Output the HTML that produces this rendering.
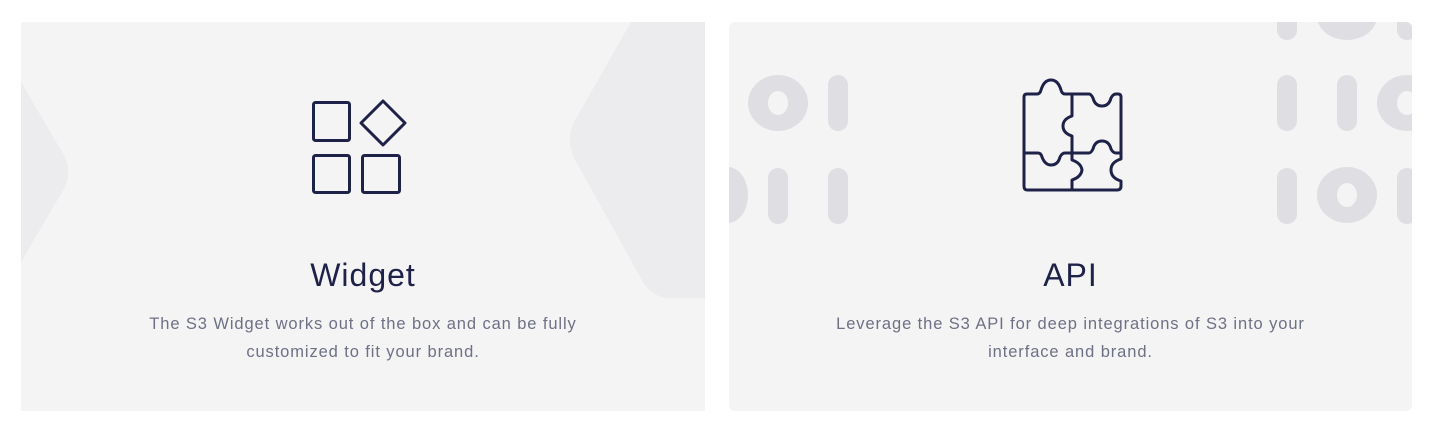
<!DOCTYPE html>
<html><head><style>
body{margin:0;width:1434px;height:429px;background:#fff;position:relative;font-family:"Liberation Sans",sans-serif;overflow:hidden}
.card{position:absolute;top:22px;height:389px;background:#f4f4f4;overflow:hidden}
.t{position:absolute;left:0;right:0;text-align:center;color:#1f2248;font-size:32px;letter-spacing:1px;top:235px}
.d{position:absolute;left:0;right:0;text-align:center;color:#6e7085;font-size:16.5px;letter-spacing:.9px;line-height:28px;top:288px}
</style></head><body>
<div class="card" style="left:21px;width:684px">
<svg width="684" height="389" style="position:absolute;left:0;top:0">
<path d="M0 60 L44 135 Q50 150 44 165 L0 240 Z" fill="#ececee"/>
<path d="M610 0 L553 100 Q545 118 553 136 L622 260 Q632 276 650 276 L684 276 L684 0 Z" fill="#ececee"/>
<g fill="none" stroke="#1f2248" stroke-width="3" stroke-linejoin="round">
<rect x="292.5" y="80.5" width="36" height="38" rx="2"/>
<rect x="292.5" y="133.5" width="36" height="37" rx="2"/>
<rect x="341.5" y="133.5" width="37" height="37" rx="2"/>
<path d="M362 79 L384 101 L362 123 L340 101 Z"/>
</g></svg>
<div class="t">Widget</div>
<div class="d">The S3 Widget works out of the box and can be fully<br>customized to fit your brand.</div>
</div>
<div class="card" style="left:729px;width:683px;border-radius:6px">
<svg width="683" height="389" style="position:absolute;left:0;top:0">
<g fill="#dfdfe3">
<ellipse cx="49" cy="81" rx="30" ry="28"/><rect x="99" y="53" width="20" height="56" rx="10"/>
<ellipse cx="-1" cy="173" rx="20" ry="28"/><rect x="39" y="146" width="20" height="56" rx="10"/><rect x="99" y="146" width="20" height="56" rx="10"/>
<rect x="548" y="-20" width="20" height="38" rx="10"/><ellipse cx="618" cy="-6" rx="30" ry="24"/><rect x="668" y="-20" width="20" height="38" rx="10"/>
<rect x="548" y="53" width="20" height="56" rx="10"/><rect x="608" y="53" width="20" height="56" rx="10"/><ellipse cx="678" cy="81" rx="30" ry="28"/>
<rect x="548" y="146" width="20" height="56" rx="10"/><ellipse cx="618" cy="173" rx="30" ry="28"/><rect x="668" y="146" width="20" height="56" rx="10"/>
</g>
<g fill="#f4f4f4"><ellipse cx="49" cy="81" rx="10" ry="12"/><ellipse cx="678" cy="81" rx="10" ry="12"/><ellipse cx="618" cy="173" rx="10" ry="12"/></g>
<g fill="none" stroke="#1f2248" stroke-width="3" stroke-linejoin="round" stroke-linecap="round">
<path d="M298 72 L308 72 Q311 72 312 68 Q315 58 322 58 Q329 58 332 68 Q333 72 336 72 L360 72 Q362 72 364 76 Q366 84 373 84 Q380 84 382 76 Q384 72 387 72 L389 72 Q392 72 392 75 L392 137 Q382 140 382 148 Q382 156 392 159 L392 164 Q392 168 388 168 L298 168 Q295 168 295 164 L295 75 Q295 72 298 72 Z"/>
<path d="M343 72 L343 94 Q334 97 334 104 Q334 111 343 114 L343 138 Q352 141 353 148 Q352 155 343 158 L343 168"/>
<path d="M295 131 L309 131 Q312 131 313 135 Q316 143 322 143 Q329 143 331 135 Q333 131 336 131 L360 131 Q362 131 364 127 Q366 119 373 119 Q380 119 382 127 Q384 131 387 131 L392 131"/>
</g></svg>
<div class="t">API</div>
<div class="d">Leverage the S3 API for deep integrations of S3 into your<br>interface and brand.</div>
</div>
</body></html>
